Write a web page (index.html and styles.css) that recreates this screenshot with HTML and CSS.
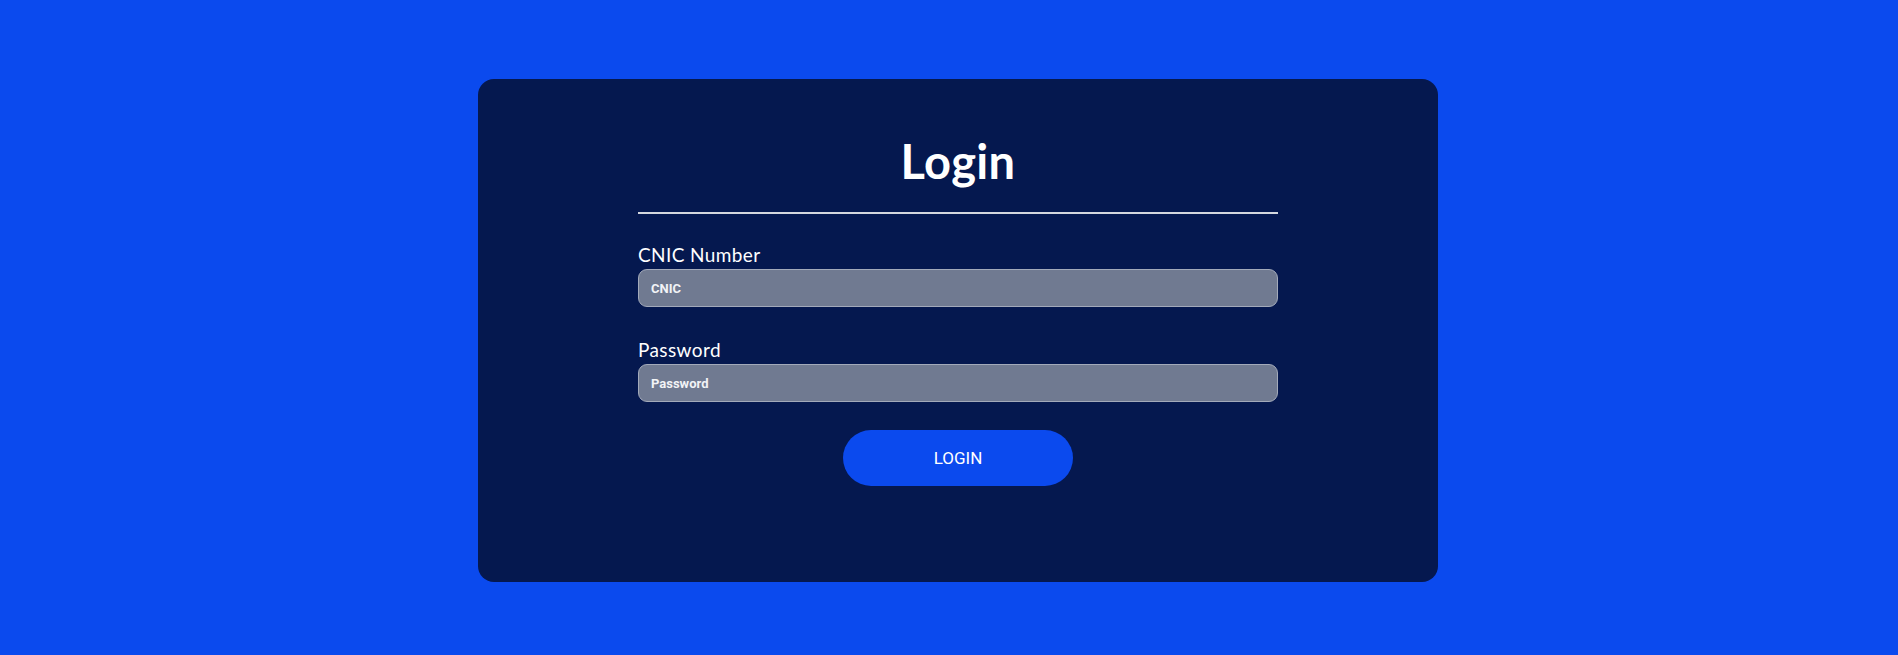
FILE: index.html
```html
<!DOCTYPE html>
<html lang="en">
<head>
<meta charset="utf-8">
<title>Login</title>
<link rel="stylesheet" href="styles.css">
</head>
<body>
<main class="page">
  <section class="card">
    <form class="login-form" onsubmit="return false;">
      <h1 class="title">Login</h1>
      <div class="divider"></div>
      <div class="field">
        <label class="label" for="cnic">CNIC Number</label>
        <input class="input" id="cnic" type="text" placeholder="CNIC">
      </div>
      <div class="field">
        <label class="label" for="pwd">Password</label>
        <input class="input" id="pwd" type="password" placeholder="Password">
      </div>
      <div class="actions">
        <button class="btn" type="submit">LOGIN</button>
      </div>
    </form>
  </section>
</main>
</body>
</html>
```
FILE: styles.css
```css
* { box-sizing: border-box; }
html, body { margin: 0; padding: 0; }
body {
  background: #0b4aee;
  font-family: "Lato", "Noto Sans", sans-serif;
  color: #ffffff;
  height: 655px;
  overflow: hidden;
}
.page {
  display: flex;
  justify-content: center;
  padding: 79px 0 0 18px;
}
.card {
  width: 960px;
  height: 503px;
  background: #05184f;
  border-radius: 16px;
  padding: 54px 160px 0;
}
.login-form {
  display: flex;
  flex-direction: column;
}
.title {
  margin: 0;
  text-align: center;
  font-size: 47px;
  line-height: 56px;
  font-weight: 700;
  letter-spacing: 0.3px;
  color: #ffffff;
}
.divider {
  margin-top: 23px;
  height: 2px;
  background: #d4d7de;
}
.field {
  display: flex;
  flex-direction: column;
  gap: 3px;
  margin-top: 30px;
}
.field + .field { margin-top: 32px; }
.label {
  font-size: 19px;
  line-height: 22px;
  font-weight: 400;
  letter-spacing: 0.4px;
  color: #ffffff;
}
.input {
  height: 38px;
  border: 1px solid #a3aaba;
  border-radius: 9px;
  background: #707a91;
  padding: 0 12px;
  font-family: "Roboto", "Liberation Sans", sans-serif;
  font-size: 13px;
  font-weight: 700;
  color: #ffffff;
  outline: none;
}
.input::placeholder {
  color: #f2f3f6;
  opacity: 1;
}
.actions {
  display: flex;
  justify-content: center;
  margin-top: 28px;
}
.btn {
  width: 230px;
  height: 56px;
  border: none;
  border-radius: 28px;
  background: #0b4aee;
  color: #ffffff;
  font-family: "Roboto", "Liberation Sans", sans-serif;
  font-size: 17px;
  font-weight: 400;
  cursor: pointer;
}
```
